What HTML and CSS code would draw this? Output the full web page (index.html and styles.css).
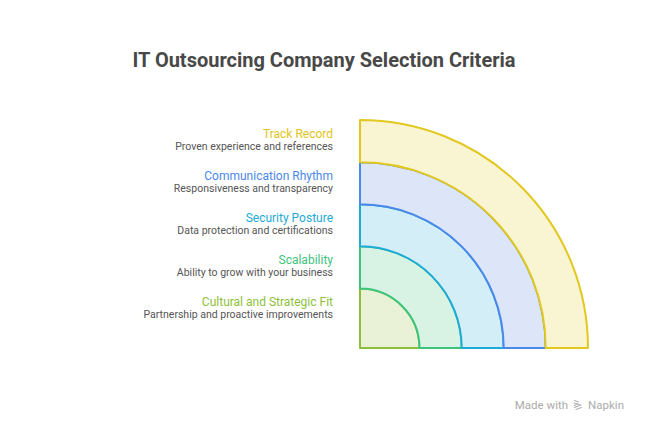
FILE: index.html
```html
<!DOCTYPE html>
<html>
<head>
<meta charset="utf-8">
<link rel="stylesheet" href="styles.css">
</head>
<body>
<div class="page">
  <h1 class="title">IT Outsourcing Company Selection Criteria</h1>
  <div class="content">
    <div class="labels">
      <div class="item">
        <div class="name c-yellow">Track Record</div>
        <div class="desc">Proven experience and references</div>
      </div>
      <div class="item">
        <div class="name c-blue">Communication Rhythm</div>
        <div class="desc">Responsiveness and transparency</div>
      </div>
      <div class="item">
        <div class="name c-cyan">Security Posture</div>
        <div class="desc">Data protection and certifications</div>
      </div>
      <div class="item">
        <div class="name c-green">Scalability</div>
        <div class="desc">Ability to grow with your business</div>
      </div>
      <div class="item">
        <div class="name c-lime">Cultural and Strategic Fit</div>
        <div class="desc">Partnership and proactive improvements</div>
      </div>
    </div>
    <svg class="chart" width="232" height="232" viewBox="0 0 232 232">
      <path d="M2,170.5 A59.5 59.5 0 0 1 61.5,230 L2,230 Z" fill="#e9f2d7" stroke="#8dbf3a" stroke-width="2" stroke-linejoin="round"/>
      <path d="M2,128.3 A101.7 101.7 0 0 1 103.7,230 L61.5,230 A59.5 59.5 0 0 0 2,170.5 Z" fill="#d8f3e4" stroke="#3cc47c" stroke-width="2" stroke-linejoin="round"/>
      <path d="M2,86.3 A143.7 143.7 0 0 1 145.7,230 L103.7,230 A101.7 101.7 0 0 0 2,128.3 Z" fill="#d4eef8" stroke="#1eaad6" stroke-width="2" stroke-linejoin="round"/>
      <path d="M2,44.3 A185.7 185.7 0 0 1 187.7,230 L145.7,230 A143.7 143.7 0 0 0 2,86.3 Z" fill="#dce6f8" stroke="#4a88ea" stroke-width="2" stroke-linejoin="round"/>
      <path d="M2,2 A228 228 0 0 1 230,230 L187.7,230 A185.7 185.7 0 0 0 2,44.3 Z" fill="#f9f5d3" stroke="#e2c81e" stroke-width="2" stroke-linejoin="round"/>
    </svg>
  </div>
  <div class="footer">
    <span>Made with</span>
    <svg class="logo" width="12" height="12" viewBox="0 0 12 12">
      <path d="M2.5,1.5 L6.5,3 M2,4 L9,6 L2.5,8.5 M4,10.5 L9.5,8.5 M2.5,6.5 L6,4.8" stroke="#b4b4b4" stroke-width="1.2" fill="none" stroke-linecap="round" stroke-linejoin="round"/>
    </svg>
    <span>Napkin</span>
  </div>
</div>
</body>
</html>
```

FILE: styles.css
```css
html, body {
  margin: 0;
  padding: 0;
  background: #ffffff;
}
.page {
  width: 648px;
  height: 432px;
  display: flex;
  flex-direction: column;
  font-family: Roboto, "Liberation Sans", sans-serif;
}
.title {
  margin: 48px 0 0 0;
  font-size: 20px;
  line-height: 24px;
  font-weight: 700;
  color: #484848;
  text-align: center;
}
.content {
  display: flex;
  flex-direction: row;
  margin-top: 46px;
  padding-left: 133px;
  gap: 25px;
}
.labels {
  width: 200px;
  padding-top: 9px;
  display: flex;
  flex-direction: column;
  gap: 14px;
  text-align: right;
}
.item {
  height: 28px;
}
.name {
  font-size: 12px;
  line-height: 14px;
}
.desc {
  font-size: 10.5px;
  line-height: 12px;
  color: #555555;
}
.c-yellow { color: #e2c420; }
.c-blue { color: #4a88ea; }
.c-cyan { color: #1eaad6; }
.c-green { color: #3cc47c; }
.c-lime { color: #8dbf3a; }
.chart {
  display: block;
}
.footer {
  margin-top: 48px;
  padding-right: 24px;
  display: flex;
  flex-direction: row;
  justify-content: flex-end;
  align-items: center;
  gap: 4px;
  font-size: 11.5px;
  line-height: 14px;
  color: #ababab;
}
.logo {
  display: block;
}
```
